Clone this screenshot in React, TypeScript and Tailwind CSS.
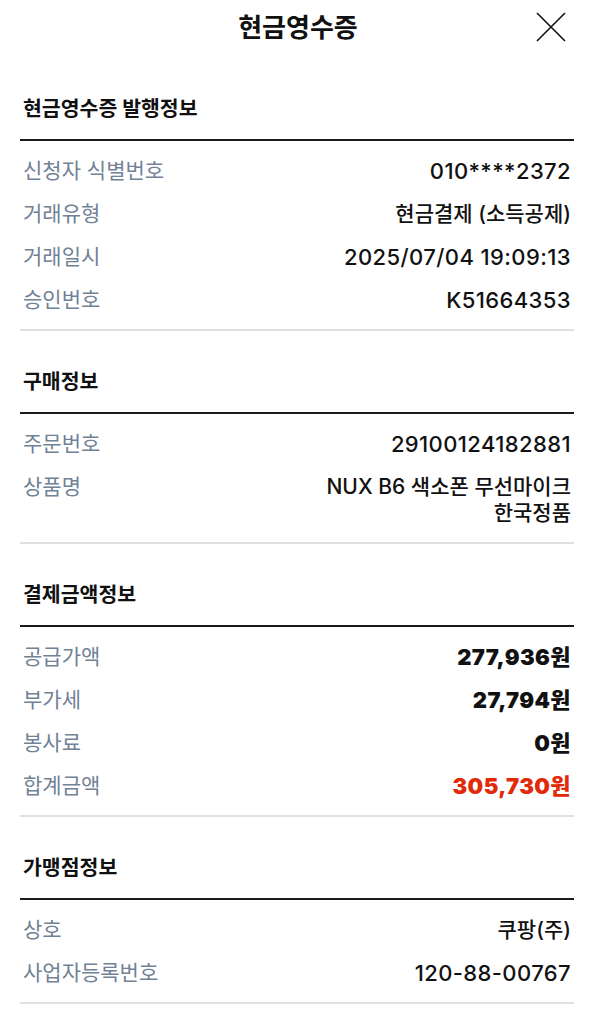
import React from "react"

type Row = { label: string; value: React.ReactNode; num?: boolean; bold?: boolean; red?: boolean }

const sections: { title: string; rows: Row[] }[] = [
    {
        title: "현금영수증 발행정보",
        rows: [
            { label: "신청자 식별번호", value: "010****2372", num: true },
            { label: "거래유형", value: "현금결제 (소득공제)" },
            { label: "거래일시", value: "2025/07/04 19:09:13", num: true },
            { label: "승인번호", value: "K51664353", num: true },
        ],
    },
    {
        title: "구매정보",
        rows: [
            { label: "주문번호", value: "29100124182881", num: true },
            {
                label: "상품명",
                value: (
                    <>
                        NUX B6 색소폰 무선마이크
                        <br />
                        한국정품
                    </>
                ),
            },
        ],
    },
    {
        title: "결제금액정보",
        rows: [
            { label: "공급가액", value: "277,936원", num: true, bold: true },
            { label: "부가세", value: "27,794원", num: true, bold: true },
            { label: "봉사료", value: "0원", num: true, bold: true },
            { label: "합계금액", value: "305,730원", num: true, bold: true, red: true },
        ],
    },
    {
        title: "가맹점정보",
        rows: [
            { label: "상호", value: "쿠팡(주)" },
            { label: "사업자등록번호", value: "120-88-00767", num: true },
        ],
    },
]

function CloseIcon() {
    return (
        <svg width="32" height="32" viewBox="0 0 32 32" fill="none" stroke="#111" strokeWidth="1.6">
            <path d="M2 2 L30 30 M30 2 L2 30" />
        </svg>
    )
}

export default function App() {
    return (
        <div className="min-h-screen w-full bg-white text-[#111] font-['Inter','Noto_Sans_CJK_KR',sans-serif]">
            {/* Header */}
            <header className="relative h-[54px] flex items-center justify-center">
                <h1 className="text-[26px] font-bold">현금영수증</h1>
                <button className="absolute right-[29px] top-[11px]">
                    <CloseIcon />
                </button>
            </header>

            <main className="pl-5 pr-[22px]">
                {sections.map((s, i) => (
                    <section key={s.title} className={i === 0 ? "pt-[40px]" : "pt-[36px]"}>
                        <h2 className="px-[3px] text-[20.5px] font-bold leading-[30px] pb-[15px]">{s.title}</h2>
                        <div className="h-[2px] bg-[#1a1a1a]" />
                        <div className="px-[3px] pt-[8px] pb-[8px] border-b-2 border-[#e0e0e0]">
                            {s.rows.map((r) => (
                                <div key={r.label} className="flex justify-between items-start py-[8.5px] leading-[26px]">
                                    <span className="text-[21px] text-[#718196]">{r.label}</span>
                                    <span
                                        className={`text-right ${r.num ? "text-[22px] tracking-[0.4px]" : "text-[21px]"} ${r.bold ? "font-black" : "font-medium"} ${r.red ? "text-[#e02a0a]" : "text-[#111]"}`}
                                    >
                                        {r.value}
                                    </span>
                                </div>
                            ))}
                        </div>
                    </section>
                ))}
            </main>
        </div>
    )
}
